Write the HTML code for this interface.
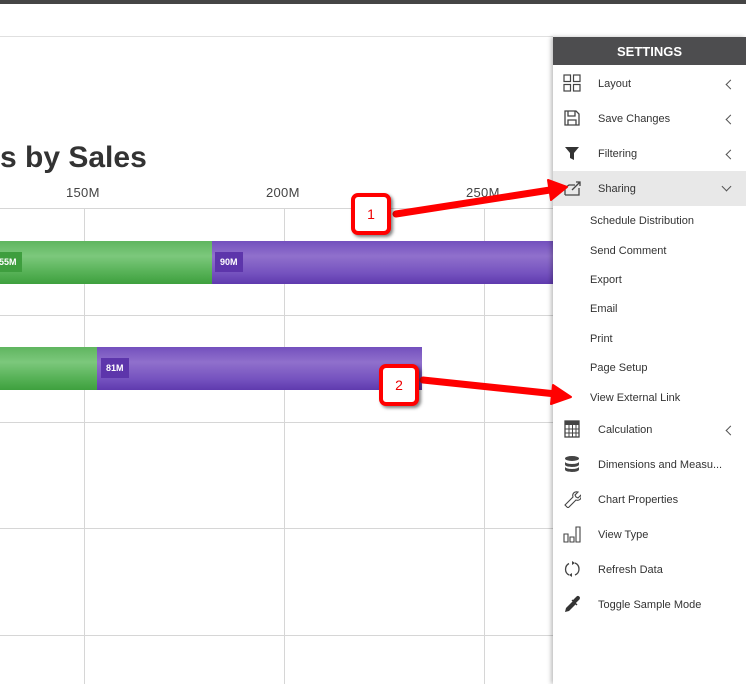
<!DOCTYPE html>
<html><head><style>
*{margin:0;padding:0;box-sizing:border-box}
body{width:746px;height:684px;position:relative;overflow:hidden;background:#fff;font-family:"Liberation Sans",sans-serif}
.a{position:absolute}
.hl{position:absolute;left:0;width:553px;height:1px;background:#d6d6d6}
.vl{position:absolute;top:208px;height:476px;width:1px;background:#d6d6d6}
.ax{position:absolute;top:185px;font-size:13px;color:#444;letter-spacing:.3px}
.g{background:linear-gradient(#5fb55f,#7cc87c 35%,#54b054 75%,#3ea03e)}
.p{background:linear-gradient(#7350bd,#9070cc 35%,#7552bf 75%,#5f3aae)}
.lb{position:absolute;top:11px;height:20px;line-height:20px;font-size:9px;font-weight:bold;color:#fff;padding:0 5px}
.panel{position:absolute;left:553px;top:37px;width:193px;height:647px;background:#fff;box-shadow:-2px 0 4px rgba(0,0,0,.25)}
.hd{height:28px;background:#4d4d4f;color:#fff;font-weight:bold;font-size:13px;text-align:center;line-height:29px}
.it{position:absolute;left:0;width:193px;height:35px;font-size:11px;color:#333;line-height:37px}
.it span{position:absolute;left:45px}
.it svg.i{position:absolute;left:10px;top:8px}
.ch{position:absolute;right:12px;top:15px;width:7px;height:7px;border-left:1.3px solid #555;border-bottom:1.3px solid #555;transform:rotate(45deg)}
.chd{position:absolute;right:16px;top:12px;width:7px;height:7px;border-left:1.3px solid #555;border-bottom:1.3px solid #555;transform:rotate(-45deg)}
.sb{position:absolute;left:37px;font-size:11px;color:#333}
.bx{position:absolute;width:40px;height:42px;border:4px solid #f00;border-radius:7px;background:#fff;color:#e00;font-size:14px;text-align:center;line-height:34px;box-shadow:2px 2px 3px rgba(0,0,0,.5)}
</style></head><body>
<div class="a" style="left:0;top:0;width:746px;height:4px;background:#454545"></div>
<div class="hl" style="top:36px;background:#e0e0e0"></div>
<div class="a" style="left:0;top:141px;font-size:30px;font-weight:bold;color:#333">s by Sales</div>
<div class="ax" style="left:66px">150M</div>
<div class="ax" style="left:266px">200M</div>
<div class="ax" style="left:466px">250M</div>
<div class="hl" style="top:208px"></div>
<div class="hl" style="top:315px"></div>
<div class="hl" style="top:422px"></div>
<div class="hl" style="top:528px"></div>
<div class="hl" style="top:635px"></div>
<div class="vl" style="left:84px"></div>
<div class="vl" style="left:284px"></div>
<div class="vl" style="left:484px"></div>
<div class="a g" style="left:0;top:241px;width:212px;height:43px"><div class="lb" style="left:-6px;background:#3e9e3e">55M</div></div>
<div class="a p" style="left:212px;top:241px;width:341px;height:43px"><div class="lb" style="left:3px;background:#5d35ab">90M</div></div>
<div class="a g" style="left:0;top:347px;width:97px;height:43px"></div>
<div class="a p" style="left:97px;top:347px;width:325px;height:43px"><div class="lb" style="left:4px;background:#5d35ab">81M</div></div>
<div class="panel">
<div class="hd">SETTINGS</div>
<div class="it" style="top:29px"><svg class="i" width="18" height="18"><g fill="none" stroke="#444" stroke-width="1.2"><rect x="1" y="1" width="6.5" height="6.5"/><rect x="10.5" y="1" width="6.5" height="6.5"/><rect x="1" y="10.5" width="6.5" height="6.5"/><rect x="10.5" y="10.5" width="6.5" height="6.5"/></g></svg><span>Layout</span><i class="ch"></i></div>
<div class="it" style="top:64px"><svg class="i" width="18" height="18"><path d="M2 2h11l3 3v11H2z M5 2v5h7V2 M5 16v-5h8v5" fill="none" stroke="#444" stroke-width="1.3"/></svg><span>Save Changes</span><i class="ch"></i></div>
<div class="it" style="top:99px"><svg class="i" width="18" height="18"><path d="M2 3h14l-5 6v7l-4-2V9z" fill="#333"/></svg><span>Filtering</span><i class="ch"></i></div>
<div class="it" style="top:134px;background:#e8e8e8"><svg class="i" width="20" height="18"><path d="M2 16h14V9 M2 16V9l4-3h6 M9 11l8-8 M13 3h4v4" fill="none" stroke="#444" stroke-width="1.3"/></svg><span>Sharing</span><i class="chd"></i></div>
<div class="sb" style="top:178px">Schedule Distribution</div>
<div class="sb" style="top:208px">Send Comment</div>
<div class="sb" style="top:237px">Export</div>
<div class="sb" style="top:266px">Email</div>
<div class="sb" style="top:296px">Print</div>
<div class="sb" style="top:325px">Page Setup</div>
<div class="sb" style="top:355px">View External Link</div>
<div class="it" style="top:375px"><svg class="i" width="18" height="18"><rect x="2" y="1" width="14" height="16" fill="none" stroke="#444" stroke-width="1.3"/><rect x="2" y="1" width="14" height="4" fill="#444"/><path d="M2 9h14M2 13h14M6 5v12M9.5 5v12M13 5v12" stroke="#444"/></svg><span>Calculation</span><i class="ch"></i></div>
<div class="it" style="top:410px"><svg class="i" width="18" height="18"><ellipse cx="9" cy="3.5" rx="7" ry="2.5" fill="#444"/><path d="M2 6.5c0 3.3 14 3.3 14 0v3c0 3.3-14 3.3-14 0zM2 11.5c0 3.3 14 3.3 14 0v3c0 3.3-14 3.3-14 0z" fill="#444"/></svg><span>Dimensions and Measu...</span></div>
<div class="it" style="top:445px"><svg class="i" width="18" height="18"><path d="M2 15l8-8c-1-3 1-6 5-5l-3 3 1 2 2 1 3-3c1 4-2 6-5 5l-8 8z" fill="none" stroke="#444" stroke-width="1.1"/></svg><span>Chart Properties</span></div>
<div class="it" style="top:480px"><svg class="i" width="18" height="18"><path d="M1 9h4v8H1zM7 12h4v5H7zM13 2h4v15h-4z" fill="none" stroke="#444" stroke-width="1.1"/></svg><span>View Type</span></div>
<div class="it" style="top:515px"><svg class="i" width="18" height="18"><path d="M6 3.5A6.5 6.5 0 0 0 6 15M12 15a6.5 6.5 0 0 0 0-12" fill="none" stroke="#444" stroke-width="1.3"/><path d="M9 1l3 2-3 2zM9 13l-3 2 3 2z" fill="#444"/></svg><span>Refresh Data</span></div>
<div class="it" style="top:550px"><svg class="i" width="18" height="18"><path d="M2 17l1-4 7-7 3 3-7 7z" fill="#333"/><path d="M10 6l4-4c1-1 3 0 2 2l-4 4z M9 5l5 5" fill="#333" stroke="#333" stroke-width="1.3"/></svg><span>Toggle Sample Mode</span></div>
</div>
<svg class="a" style="left:0;top:0" width="746" height="684"><g fill="#f00" stroke="#f00" stroke-linecap="round">
<line x1="396" y1="214" x2="550" y2="190" stroke-width="7"/>
<path d="M548 180l19 7-16 13z" stroke-width="2" stroke-linejoin="round"/>
<line x1="423" y1="380" x2="556" y2="394" stroke-width="7"/>
<path d="M553 385l18 12-20 7z" stroke-width="2" stroke-linejoin="round"/>
</g></svg>
<div class="bx" style="left:351px;top:193px">1</div>
<div class="bx" style="left:379px;top:364px">2</div>
</body></html>
